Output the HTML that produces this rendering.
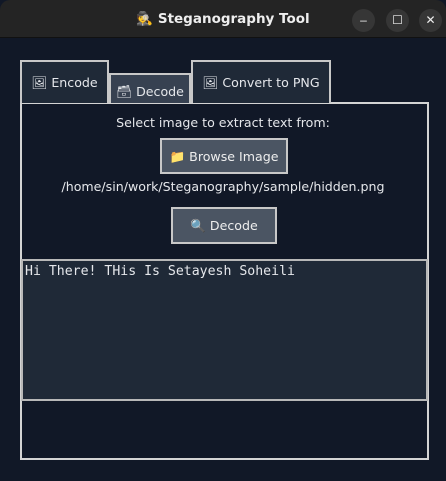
<!DOCTYPE html>
<html><head><style>
body{margin:0;width:446px;height:481px;overflow:hidden;background:#111827;font-family:"Liberation Sans","DejaVu Sans",sans-serif;position:relative}
.tb{position:absolute;left:0;top:0;width:446px;height:37px;background:#242424;border-radius:10px 10px 0 0;border-bottom:1px solid #111}
.title{position:absolute;top:11px;left:0;width:446px;text-align:center;color:#eee;font-weight:bold;font-size:13.5px;font-family:"DejaVu Sans",sans-serif}
.wb{position:absolute;top:9px;width:23px;height:23px;border-radius:50%;background:#363636;color:#eee;font-size:12px;text-align:center;line-height:23px}
.tab{position:absolute;background:#1f2937;border:2px solid #c8c8c8;border-bottom:none;color:#e5e7eb;font-size:12.6px;font-family:"DejaVu Sans",sans-serif;box-sizing:border-box;text-align:center}
.panel{position:absolute;left:20px;top:102px;width:409px;height:358px;border:2px solid #d4d4d4;box-sizing:border-box;background:#111827}
.t{position:absolute;left:0;width:446px;text-align:center;color:#e5e7eb;font-size:12.6px;font-family:"DejaVu Sans",sans-serif}
.btn{position:absolute;background:#4b5563;border:2px solid #c8c8c8;box-sizing:border-box;color:#eee;font-size:12.6px;font-family:"DejaVu Sans",sans-serif;text-align:center}
.ta{position:absolute;left:21px;top:259px;width:407px;height:142px;background:#1f2937;border:2px solid #b8b8b8;box-sizing:border-box;color:#e5e7eb;font-family:"DejaVu Sans Mono","Liberation Mono",monospace;font-size:13.2px;padding:3px 0 0 2px}
</style></head><body>
<div class="tb"></div>
<div class="title">🕵 Steganography Tool</div>
<div class="wb" style="left:352px">–</div>
<div class="wb" style="left:386px">☐</div>
<div class="wb" style="left:419px">✕</div>
<div class="panel"></div>
<div class="tab" style="left:20px;top:60px;width:89px;height:43px;line-height:42px">🖼 Encode</div>
<div class="tab" style="left:109px;top:73px;width:82px;height:30px;line-height:33px;background:#374151">🗃 Decode</div>
<div class="tab" style="left:191px;top:60px;width:140px;height:43px;line-height:42px">🖼 Convert to PNG</div>
<div class="t" style="top:115px">Select image to extract text from:</div>
<div class="btn" style="left:160px;top:138px;width:128px;height:36px;line-height:33px">📁 Browse Image</div>
<div class="t" style="top:179px">/home/sin/work/Steganography/sample/hidden.png</div>
<div class="btn" style="left:171px;top:207px;width:106px;height:37px;line-height:34px">🔍 Decode</div>
<div class="ta">Hi There! THis Is Setayesh Soheili</div>
</body></html>
